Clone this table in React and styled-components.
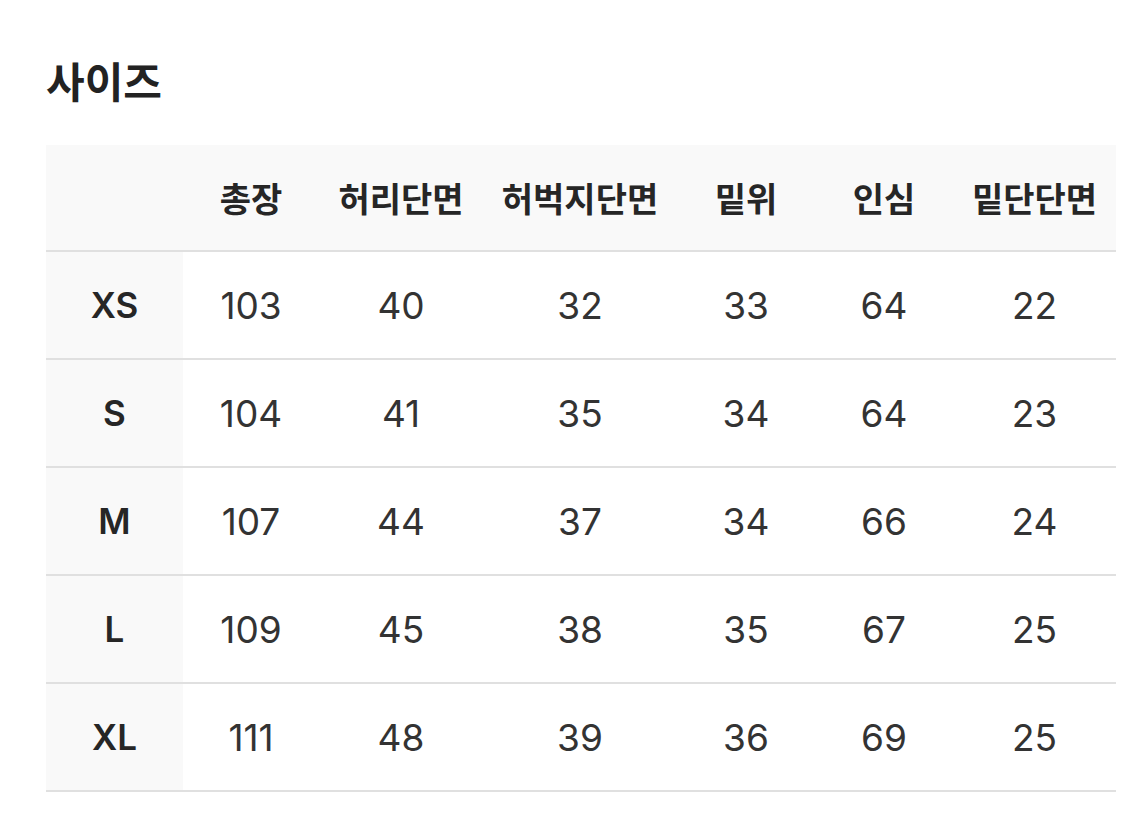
import React from "react";
import styled, { createGlobalStyle } from "styled-components";

const GlobalStyle = createGlobalStyle`
  html, body {
    margin: 0;
    padding: 0;
    background: #ffffff;
  }
  body {
    font-family: "Inter", "Noto Sans CJK KR", sans-serif;
    color: #222222;
  }
`;

const Page = styled.div`
  width: 1125px;
  height: 823px;
  box-sizing: border-box;
  padding: 50px 9px 0 46px;
`;

const Title = styled.h2`
  margin: 0 0 36px;
  font-family: "Noto Sans CJK KR", sans-serif;
  font-size: 42px;
  font-weight: 700;
  line-height: 59px;
  letter-spacing: 0;
  color: #222222;
`;

const Table = styled.table`
  width: 1070px;
  border-collapse: collapse;
  table-layout: fixed;
`;

const HeadRow = styled.tr`
  height: 106px;
  background: #f9f9f9;
  border-bottom: 2px solid #e0e0e0;
`;

const Row = styled.tr`
  height: 108px;
  border-bottom: 2px solid #e0e0e0;
`;

const HeadCell = styled.th`
  padding: 0;
  font-family: "Noto Sans CJK KR", sans-serif;
  font-size: 34px;
  font-weight: 700;
  color: #262626;
  text-align: center;
  vertical-align: middle;
`;

const SizeCell = styled.th`
  padding: 0;
  background: #f9f9f9;
  font-family: "Inter", sans-serif;
  font-size: 35px;
  font-weight: 600;
  color: #262626;
  text-align: center;
`;

const Cell = styled.td`
  padding: 0;
  font-family: "Inter", sans-serif;
  font-size: 37px;
  font-weight: 400;
  color: #333333;
  text-align: center;
`;

const columns = [
  { label: "", width: 137 },
  { label: "총장", width: 136 },
  { label: "허리단면", width: 164 },
  { label: "허벅지단면", width: 194 },
  { label: "밑위", width: 138 },
  { label: "인심", width: 138 },
  { label: "밑단단면", width: 163 },
];

const rows = [
  ["XS", 103, 40, 32, 33, 64, 22],
  ["S", 104, 41, 35, 34, 64, 23],
  ["M", 107, 44, 37, 34, 66, 24],
  ["L", 109, 45, 38, 35, 67, 25],
  ["XL", 111, 48, 39, 36, 69, 25],
];

export default function App() {
  return (
    <>
      <GlobalStyle />
      <Page>
        <Title>사이즈</Title>
        <Table>
          <colgroup>
            {columns.map((c, i) => (
              <col key={i} style={{ width: c.width }} />
            ))}
          </colgroup>
          <thead>
            <HeadRow>
              {columns.map((c, i) => (
                <HeadCell key={i}>{c.label}</HeadCell>
              ))}
            </HeadRow>
          </thead>
          <tbody>
            {rows.map((r) => (
              <Row key={r[0]}>
                <SizeCell>{r[0]}</SizeCell>
                {r.slice(1).map((v, i) => (
                  <Cell key={i}>{v}</Cell>
                ))}
              </Row>
            ))}
          </tbody>
        </Table>
      </Page>
    </>
  );
}
